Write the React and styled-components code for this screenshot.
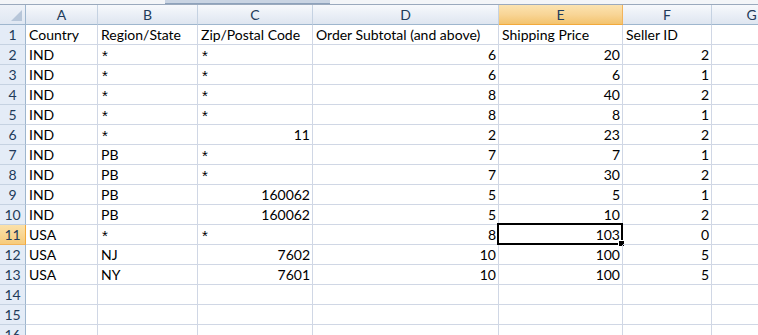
import React from "react";
import styled, { createGlobalStyle, css } from "styled-components";

const Global = createGlobalStyle`
  html, body { margin: 0; padding: 0; background: #ffffff; }
  body { font-family: Lato, "Liberation Sans", sans-serif; }
`;

const COLS = [
  { key: "A", w: 72 },
  { key: "B", w: 100 },
  { key: "C", w: 115 },
  { key: "D", w: 186 },
  { key: "E", w: 124 },
  { key: "F", w: 89 },
  { key: "G", w: 80 },
];

const DATA = [
  ["Country", "Region/State", "Zip/Postal Code", "Order Subtotal (and above)", "Shipping Price", "Seller ID"],
  ["IND", "*", "*", 6, 20, 2],
  ["IND", "*", "*", 6, 6, 1],
  ["IND", "*", "*", 8, 40, 2],
  ["IND", "*", "*", 8, 8, 1],
  ["IND", "*", 11, 2, 23, 2],
  ["IND", "PB", "*", 7, 7, 1],
  ["IND", "PB", "*", 7, 30, 2],
  ["IND", "PB", 160062, 5, 5, 1],
  ["IND", "PB", 160062, 5, 10, 2],
  ["USA", "*", "*", 8, 103, 0],
  ["USA", "NJ", 7602, 10, 100, 5],
  ["USA", "NY", 7601, 10, 100, 5],
  [],
  [],
  [],
];

const SEL_ROW = 11;
const SEL_COL = "E";

const Page = styled.div`
  width: 758px;
  height: 335px;
  overflow: hidden;
  background: #fff;
  display: flex;
  flex-direction: column;
`;

const TopStrip = styled.div`
  height: 5px;
  flex: 0 0 5px;
  box-sizing: border-box;
  background: #f3f5f8;
  border-bottom: 1px solid #9aa9bd;
  position: relative;
`;

const StripThumb = styled.div`
  position: absolute;
  left: 165px;
  width: 165px;
  top: 0;
  height: 3px;
  background: #c9d4e3;
  border-bottom: 1px solid #8ea2bb;
`;

const Grid = styled.div`
  display: grid;
  grid-template-columns: 26px ${COLS.map((c) => c.w + "px").join(" ")};
  grid-auto-rows: 20px;
`;

const Corner = styled.div`
  box-sizing: border-box;
  border-right: 1px solid #9eb6ce;
  border-bottom: 1px solid #9eb6ce;
  background: linear-gradient(#eef2f8, #dfe7f2);
  position: relative;
  &::after {
    content: "";
    position: absolute;
    right: 3px;
    bottom: 3px;
    width: 0;
    height: 0;
    border-left: 11px solid transparent;
    border-bottom: 11px solid #b7c6d9;
  }
`;

const ColHead = styled.div`
  box-sizing: border-box;
  border-right: 1px solid #c5d2e2;
  border-bottom: 1px solid #9eb6ce;
  background: linear-gradient(#f7f9fc 0%, #e9eef6 55%, #dfe6f0 100%);
  color: #223b5a;
  font-size: 14px;
  display: flex;
  align-items: center;
  justify-content: center;
  ${(p) =>
    p.$sel &&
    css`
      background: linear-gradient(#fbe3b0 0%, #f8d596 50%, #f3c36e 100%);
      border-bottom-color: #f2a93b;
      border-right-color: #f2b45c;
    `}
`;

const RowHead = styled.div`
  box-sizing: border-box;
  border-right: 1px solid #9eb6ce;
  border-bottom: 1px solid #c5d2e2;
  background: #e4ecf7;
  color: #223b5a;
  font-size: 14px;
  display: flex;
  align-items: center;
  justify-content: center;
  ${(p) =>
    p.$sel &&
    css`
      background: linear-gradient(#fbe1aa, #f6cb7d);
      border-right-color: #f2a93b;
      border-bottom-color: #f2b45c;
    `}
`;

const Cell = styled.div`
  box-sizing: border-box;
  border-right: 1px solid #d0d7e5;
  border-bottom: 1px solid #d0d7e5;
  font-size: 14px;
  color: #000;
  white-space: nowrap;
  overflow: visible;
  display: flex;
  align-items: flex-end;
  padding: 0 2px 1px 3px;
  justify-content: ${(p) => (p.$num ? "flex-end" : "flex-start")};
  position: relative;
  line-height: 17px;
`;

const Star = styled.span`
  font-family: "Liberation Sans", sans-serif;
  font-size: 15px;
  line-height: 17px;
  position: relative;
  top: 1px;
  left: 1px;
`;

const SelBox = styled.div`
  position: absolute;
  left: -2px;
  top: -2px;
  right: -1px;
  bottom: -1px;
  border: 2px solid #000;
  pointer-events: none;
  &::after {
    content: "";
    position: absolute;
    right: -4px;
    bottom: -4px;
    width: 5px;
    height: 5px;
    background: #000;
    border: 1px solid #fff;
  }
`;

export default function App() {
  return (
    <>
      <Global />
      <Page>
        <TopStrip>
          <StripThumb />
        </TopStrip>
        <Grid>
          <Corner />
          {COLS.map((c) => (
            <ColHead key={c.key} $sel={c.key === SEL_COL}>
              {c.key}
            </ColHead>
          ))}
          {DATA.map((row, ri) => {
            const rn = ri + 1;
            return (
              <React.Fragment key={rn}>
                <RowHead $sel={rn === SEL_ROW}>{rn}</RowHead>
                {COLS.map((c, ci) => {
                  const v = row[ci];
                  const isSel = rn === SEL_ROW && c.key === SEL_COL;
                  return (
                    <Cell key={c.key} $num={typeof v === "number"}>
                      {v === "*" ? <Star>*</Star> : v}
                      {isSel && <SelBox />}
                    </Cell>
                  );
                })}
              </React.Fragment>
            );
          })}
        </Grid>
      </Page>
    </>
  );
}
